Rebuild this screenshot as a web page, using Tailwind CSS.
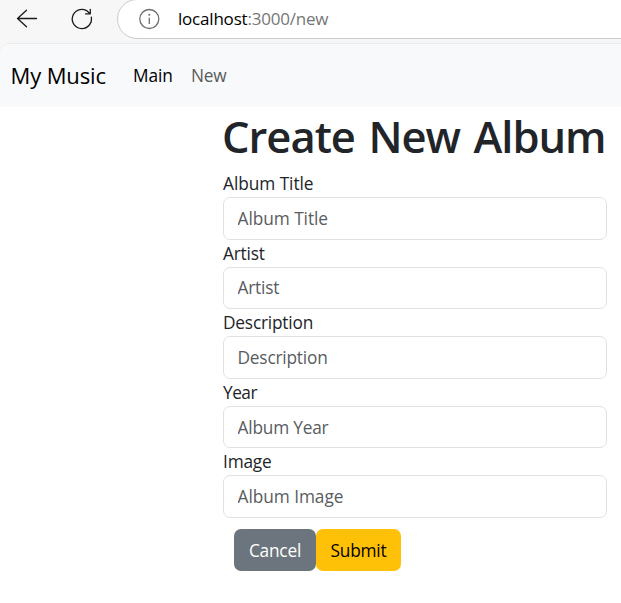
<!DOCTYPE html>
<html lang="en">
<head>
<meta charset="utf-8">
<title>My Music</title>
<script src="https://cdn.jsdelivr.net/npm/@tailwindcss/browser@4"></script>
</head>
<body class="w-[621px] h-[603px] overflow-hidden bg-white font-['Open_Sans','Noto_Sans',sans-serif] text-[17.3px] text-[#212529] tracking-[-0.2px]">
<div class="h-[107px] bg-[#f7f7f7] flex flex-col">
  <header class="h-[43px] shrink-0 flex items-start">
    <svg class="w-[117px] h-[39px] shrink-0" viewBox="0 0 117 39" fill="none" stroke="#1b1b1b" stroke-width="1.3" stroke-linecap="round" stroke-linejoin="round">
      <path d="M36.5 18.5H17.5M26.5 10.2L17.5 18.5L26.5 26.8"/>
      <path d="M91.3 17.2A9.6 9.6 0 1 1 86.5 10.6L90.3 13.8M90.3 9.3V13.8H85.5"/>
    </svg>
    <div class="flex-1 h-[40px] -mt-px -mr-[4px] rounded-l-full border border-[#cbcbcb] bg-white flex items-center pl-[20px]">
      <svg class="w-[22px] h-[22px] shrink-0" viewBox="0 0 22 22" fill="none" stroke="#6e6e6e" stroke-width="1.3">
        <circle cx="11.3" cy="11" r="9.5"/><path d="M11.3 9.8V16"/><circle cx="11.3" cy="6.8" r="1" fill="#6e6e6e" stroke="none"/>
      </svg>
      <div class="ml-[18px] text-[17px] text-black whitespace-nowrap">localhost<span class="text-[#767676]">:3000/new</span></div>
    </div>
  </header>
  <nav class="flex-1 rounded-tl-[9px] border-t border-[#e9eaeb] bg-[#f8f9fa] flex items-center pl-[10.5px] whitespace-nowrap">
    <a class="w-[122.5px] text-[22px] text-black tracking-[-0.12px]">My Music</a>
    <a class="w-[58px] text-black tracking-[-0.1px]">Main</a>
    <a class="text-[#595a5b]">New</a>
  </nav>
</div>
<main class="ml-[223px] w-[384px] flex flex-col">
  <h1 class="h-[63px] leading-[60px] -ml-px text-[43.5px] font-semibold whitespace-nowrap tracking-[-1px] [word-spacing:3.2px]">Create New Album</h1>
  <form class="flex flex-col">
    <label class="h-[27px] leading-[28px] tracking-[-0.05px]">Album Title</label>
    <input class="h-[42.6px] w-full rounded-[7px] border border-[#dee2e6] px-[13.5px] tracking-[-0.05px] placeholder:text-[#595c5f]" placeholder="Album Title">
    <label class="h-[27px] leading-[28px]">Artist</label>
    <input class="h-[42.6px] w-full rounded-[7px] border border-[#dee2e6] px-[13.5px] placeholder:text-[#595c5f]" placeholder="Artist">
    <label class="h-[27px] leading-[28px]">Description</label>
    <input class="h-[42.6px] w-full rounded-[7px] border border-[#dee2e6] px-[13.5px] placeholder:text-[#595c5f]" placeholder="Description">
    <label class="h-[27px] leading-[28px] tracking-[-0.5px]">Year</label>
    <input class="h-[42.6px] w-full rounded-[7px] border border-[#dee2e6] px-[13.5px] placeholder:text-[#595c5f]" placeholder="Album Year">
    <label class="h-[27px] leading-[28px]">Image</label>
    <input class="h-[42.6px] w-full rounded-[7px] border border-[#dee2e6] px-[13.5px] tracking-[-0.05px] placeholder:text-[#595c5f]" placeholder="Album Image">
    <div class="flex mt-[11px] ml-[11px]">
      <button type="button" class="w-[82px] h-[42px] pt-[2px] rounded-[7px] bg-[#6c757d] text-white">Cancel</button>
      <button type="button" class="w-[85px] h-[42px] pt-[2px] rounded-[7px] bg-[#ffc107] text-black">Submit</button>
    </div>
  </form>
</main>
</body>
</html>
